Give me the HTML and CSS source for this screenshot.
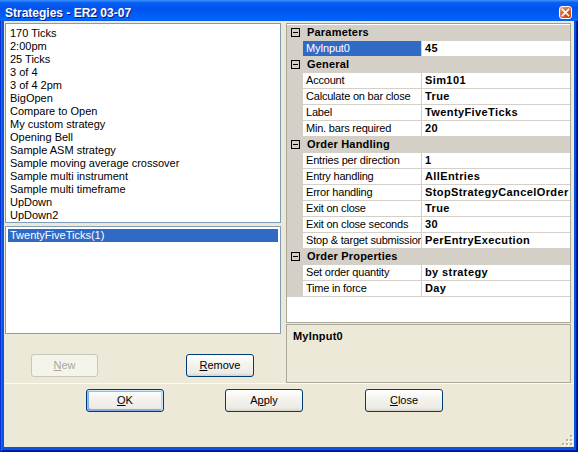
FILE: index.html
```html
<!DOCTYPE html>
<html>
<head>
<meta charset="utf-8">
<title>Strategies - ER2 03-07</title>
<link rel="stylesheet" href="styles.css">
</head>
<body>
<div class="window">
  <div class="titlebar">
    <span class="title">Strategies - ER2 03-07</span>
    <span class="close-btn"><svg width="11" height="11" viewBox="0 0 11 11"><path d="M2.5 2.5 L8.5 8.5 M8.5 2.5 L2.5 8.5" stroke="#fff" stroke-width="1.7" fill="none" stroke-linecap="square"/></svg></span>
  </div>
  <div class="client">
    <div class="split">
      <div class="left">
        <div class="listbox list-strategies">
          <div class="item">170 Ticks</div>
          <div class="item">2:00pm</div>
          <div class="item">25 Ticks</div>
          <div class="item">3 of 4</div>
          <div class="item">3 of 4 2pm</div>
          <div class="item">BigOpen</div>
          <div class="item">Compare to Open</div>
          <div class="item">My custom strategy</div>
          <div class="item">Opening Bell</div>
          <div class="item">Sample ASM strategy</div>
          <div class="item">Sample moving average crossover</div>
          <div class="item">Sample multi instrument</div>
          <div class="item">Sample multi timeframe</div>
          <div class="item">UpDown</div>
          <div class="item">UpDown2</div>
        </div>
        <div class="listbox list-instances">
          <div class="item selected">TwentyFiveTicks(1)</div>
        </div>
        <div class="left-buttons">
          <button class="btn btn-new" disabled><u>N</u>ew</button>
          <button class="btn btn-remove"><u>R</u>emove</button>
        </div>
      </div>
      <div class="right">
        <div class="grid">
          <div class="pcat"><span class="minus"></span>Parameters</div>
          <div class="prow"><span class="gutter"></span><span class="plabel selected">MyInput0</span><span class="pvalue">45</span></div>
          <div class="pcat"><span class="minus"></span>General</div>
          <div class="prow"><span class="gutter"></span><span class="plabel">Account</span><span class="pvalue">Sim101</span></div>
          <div class="prow"><span class="gutter"></span><span class="plabel">Calculate on bar close</span><span class="pvalue">True</span></div>
          <div class="prow"><span class="gutter"></span><span class="plabel">Label</span><span class="pvalue">TwentyFiveTicks</span></div>
          <div class="prow"><span class="gutter"></span><span class="plabel">Min. bars required</span><span class="pvalue">20</span></div>
          <div class="pcat"><span class="minus"></span>Order Handling</div>
          <div class="prow"><span class="gutter"></span><span class="plabel">Entries per direction</span><span class="pvalue">1</span></div>
          <div class="prow"><span class="gutter"></span><span class="plabel">Entry handling</span><span class="pvalue">AllEntries</span></div>
          <div class="prow"><span class="gutter"></span><span class="plabel">Error handling</span><span class="pvalue">StopStrategyCancelOrder</span></div>
          <div class="prow"><span class="gutter"></span><span class="plabel">Exit on close</span><span class="pvalue">True</span></div>
          <div class="prow"><span class="gutter"></span><span class="plabel">Exit on close seconds</span><span class="pvalue">30</span></div>
          <div class="prow"><span class="gutter"></span><span class="plabel">Stop &amp; target submission</span><span class="pvalue">PerEntryExecution</span></div>
          <div class="pcat"><span class="minus"></span>Order Properties</div>
          <div class="prow"><span class="gutter"></span><span class="plabel">Set order quantity</span><span class="pvalue">by strategy</span></div>
          <div class="prow"><span class="gutter"></span><span class="plabel">Time in force</span><span class="pvalue">Day</span></div>
        </div>
        <div class="help">MyInput0</div>
      </div>
    </div>
    <div class="bottom-buttons">
      <button class="btn btn-default"><u>O</u>K</button>
      <button class="btn">A<u>p</u>ply</button>
      <button class="btn btn-close"><u>C</u>lose</button>
    </div>
    <svg class="grip" width="12" height="12" viewBox="0 0 12 12">
      <g fill="#fff">
        <rect x="10" y="2" width="2" height="2"/>
        <rect x="6" y="6" width="2" height="2"/><rect x="10" y="6" width="2" height="2"/>
        <rect x="2" y="10" width="2" height="2"/><rect x="6" y="10" width="2" height="2"/><rect x="10" y="10" width="2" height="2"/>
      </g>
      <g fill="#B5B2A3">
        <rect x="9" y="1" width="2" height="2"/>
        <rect x="5" y="5" width="2" height="2"/><rect x="9" y="5" width="2" height="2"/>
        <rect x="1" y="9" width="2" height="2"/><rect x="5" y="9" width="2" height="2"/><rect x="9" y="9" width="2" height="2"/>
      </g>
    </svg>
  </div>
</div>
</body>
</html>
```
FILE: styles.css
```css
html, body {
  margin: 0;
  padding: 0;
  background: #ECE9D8;
}

.window {
  width: 578px;
  height: 452px;
  display: flex;
  flex-direction: column;
  background: #0855DD;
  box-shadow: inset 1px 0 #0831D9, inset -1px 0 #00138C, inset 0 -1px #00138C,
              inset 2px 0 #166AEE, inset -2px 0 #001EA0, inset 0 -2px #001EA0;
  font-family: "Liberation Sans", Arial, sans-serif;
  font-size: 11px;
  color: #000;
  overflow: hidden;
}

.titlebar {
  height: 21px;
  box-sizing: border-box;
  display: flex;
  align-items: flex-start;
  padding: 6px 6px 0 5px;
  background: linear-gradient(180deg, #3C95FF 0, #0A5FF0 12%, #0053EE 40%, #0061FA 85%, #0665FA 95%, #0B55E0 100%);
}

.title {
  font-weight: bold;
  font-size: 12px;
  line-height: 14px;
  color: #fff;
  text-shadow: 1px 1px #0A1883;
}

.close-btn {
  margin-left: auto;
  width: 13px;
  height: 13px;
  box-sizing: border-box;
  border: 1px solid #fff;
  border-radius: 3px;
  background: radial-gradient(circle at 85% 85%, #C44000 0, #DC6527 55%, #E08058 75%, #F6B8A0 95%);
  display: flex;
  align-items: center;
  justify-content: center;
}

.close-btn svg {
  display: block;
}

.client {
  flex: 1;
  margin: 0 4px 5px 4px;
  background: #ECE9D8;
  position: relative;
  display: flex;
  flex-direction: column;
}

.split {
  display: flex;
  height: 363px;
  box-sizing: border-box;
  padding-top: 2px;
  border-bottom: 1px solid #FBFAF6;
}

.left {
  width: 282px;
  box-sizing: border-box;
  padding-left: 1px;
  display: flex;
  flex-direction: column;
}

.listbox {
  width: 276px;
  box-sizing: border-box;
  border: 1px solid #7F9DB9;
  background: #fff;
  padding: 3px 2px 0 2px;
  overflow: hidden;
}

.list-strategies {
  height: 200px;
}

.list-instances {
  height: 108px;
  margin-top: 3px;
  padding-top: 2px;
}

.item {
  height: 13px;
  line-height: 13px;
  padding-left: 2px;
  white-space: nowrap;
}

.item.selected {
  background: #316AC5;
  color: #fff;
}

.left-buttons {
  display: flex;
  margin-top: 20px;
  height: 23px;
}

.btn {
  height: 23px;
  box-sizing: border-box;
  border: 1px solid #003C74;
  border-radius: 3px;
  background: linear-gradient(180deg, #FFFFFF 0, #F4F3EE 40%, #ECEBE6 86%, #D6D0C5 100%);
  font-family: "Liberation Sans", Arial, sans-serif;
  font-size: 11px;
  line-height: 13px;
  color: #000;
  padding: 0;
  width: 78px;
  text-align: center;
}

.btn u {
  text-decoration: underline;
  text-underline-offset: 1px;
}

.btn-new {
  margin-left: 26px;
  width: 67px;
  border-color: #C9C7BA;
  background: #F5F4EA;
  color: #ACA899;
}

.btn-remove {
  margin-left: 88px;
  width: 68px;
}

.btn-default {
  box-shadow: inset -1px 1px #CEE7FF, inset 1px 2px #98B8EA, inset -2px 0 #BCD4F6, inset 1px -1px #89ADE4, inset 2px -2px #89ADE4;
}

.right {
  width: 285px;
  display: flex;
  flex-direction: column;
  gap: 1px;
}

.grid {
  height: 300px;
  box-sizing: border-box;
  border: 1px solid #ACA899;
  border-top-color: #A09D90;
  background: #fff;
  padding-top: 1px;
}

.pcat {
  height: 16px;
  display: flex;
  align-items: center;
  background: #D4D0C8;
  font-weight: bold;
  letter-spacing: 0.2px;
  line-height: 15px;
  padding-left: 4px;
  padding-bottom: 1px;
  box-sizing: border-box;
  white-space: nowrap;
}

.minus {
  width: 9px;
  height: 9px;
  box-sizing: border-box;
  border: 1px solid #000;
  margin-right: 7px;
  position: relative;
  background: #D4D0C8;
}

.minus::after {
  content: "";
  position: absolute;
  left: 1px;
  top: 3px;
  width: 5px;
  height: 1px;
  background: #000;
}

.prow {
  height: 16px;
  display: flex;
}

.gutter {
  width: 16px;
  flex: none;
  background: #D4D0C8;
}

.plabel {
  width: 119px;
  flex: none;
  box-sizing: border-box;
  border-right: 1px solid #D4D0C8;
  border-bottom: 1px solid #D4D0C8;
  padding-left: 3px;
  line-height: 15px;
  white-space: nowrap;
  overflow: hidden;
  letter-spacing: -0.2px;
}

.plabel.selected {
  background: #316AC5;
  background-clip: padding-box;
  color: #fff;
}

.pvalue {
  flex: 1;
  min-width: 0;
  border-bottom: 1px solid #D4D0C8;
  padding-left: 3px;
  line-height: 15px;
  font-weight: bold;
  letter-spacing: 0.4px;
  white-space: nowrap;
  overflow: hidden;
}

.help {
  height: 59px;
  box-sizing: border-box;
  border: 1px solid #ACA899;
  padding: 5px 6px 0 6px;
  font-weight: bold;
  line-height: 13px;
  letter-spacing: 0.2px;
}

.bottom-buttons {
  display: flex;
  margin-top: 5px;
  padding-left: 82px;
  gap: 61px;
}

.btn-close {
  margin-left: 1px;
}

.grip {
  position: absolute;
  right: 1px;
  bottom: 1px;
}
```
